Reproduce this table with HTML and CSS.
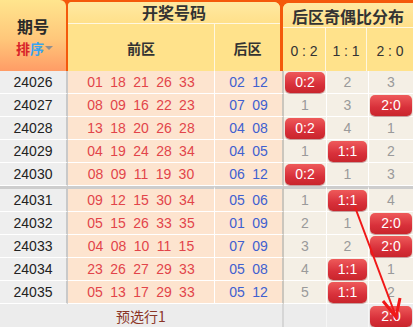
FILE: index.html
```html
<!DOCTYPE html>
<html lang="zh">
<head>
<meta charset="utf-8">
<title>后区奇偶比分布</title>
<link rel="stylesheet" href="styles.css">
</head>
<body>
<div class="chart">
  <div class="head">
    <div class="h-issue">
      <div class="h-title">期号</div>
      <div class="sort"><span class="s-red">排</span><span class="s-blue">序</span><span class="caret"></span></div>
    </div>
    <div class="h-draw">
      <div class="h-top">开奖号码</div>
      <div class="h-sub">
        <div class="h-front">前区</div>
        <div class="h-back">后区</div>
      </div>
    </div>
    <div class="h-ratio">
      <div class="h-top h-top-r">后区奇偶比分布</div>
      <div class="h-sub">
        <div class="h-r h-r1">0 : 2</div>
        <div class="h-r h-r2">1 : 1</div>
        <div class="h-r h-r3">2 : 0</div>
      </div>
    </div>
  </div>
  <table class="grid">
    <tbody>
      <tr>
        <td class="c-issue">24026</td>
        <td class="c-front"><span>01</span><span>18</span><span>21</span><span>26</span><span>33</span></td>
        <td class="c-back"><span>02</span><span>12</span></td>
        <td class="c-r1"><div class="badge">0:2</div></td>
        <td class="c-r2">2</td>
        <td class="c-r3">3</td>
      </tr>
      <tr>
        <td class="c-issue">24027</td>
        <td class="c-front"><span>08</span><span>09</span><span>16</span><span>22</span><span>23</span></td>
        <td class="c-back"><span>07</span><span>09</span></td>
        <td class="c-r1">1</td>
        <td class="c-r2">3</td>
        <td class="c-r3"><div class="badge">2:0</div></td>
      </tr>
      <tr>
        <td class="c-issue">24028</td>
        <td class="c-front"><span>13</span><span>18</span><span>20</span><span>26</span><span>28</span></td>
        <td class="c-back"><span>04</span><span>08</span></td>
        <td class="c-r1"><div class="badge">0:2</div></td>
        <td class="c-r2">4</td>
        <td class="c-r3">1</td>
      </tr>
      <tr>
        <td class="c-issue">24029</td>
        <td class="c-front"><span>04</span><span>19</span><span>24</span><span>28</span><span>34</span></td>
        <td class="c-back"><span>04</span><span>05</span></td>
        <td class="c-r1">1</td>
        <td class="c-r2"><div class="badge">1:1</div></td>
        <td class="c-r3">2</td>
      </tr>
      <tr>
        <td class="c-issue">24030</td>
        <td class="c-front"><span>08</span><span>09</span><span>11</span><span>19</span><span>30</span></td>
        <td class="c-back"><span>06</span><span>12</span></td>
        <td class="c-r1"><div class="badge">0:2</div></td>
        <td class="c-r2">1</td>
        <td class="c-r3">3</td>
      </tr>
      <tr class="sep">
        <td class="c-issue">24031</td>
        <td class="c-front"><span>09</span><span>12</span><span>15</span><span>30</span><span>34</span></td>
        <td class="c-back"><span>05</span><span>06</span></td>
        <td class="c-r1">1</td>
        <td class="c-r2"><div class="badge">1:1</div></td>
        <td class="c-r3">4</td>
      </tr>
      <tr>
        <td class="c-issue">24032</td>
        <td class="c-front"><span>05</span><span>15</span><span>26</span><span>33</span><span>35</span></td>
        <td class="c-back"><span>01</span><span>09</span></td>
        <td class="c-r1">2</td>
        <td class="c-r2">1</td>
        <td class="c-r3"><div class="badge">2:0</div></td>
      </tr>
      <tr>
        <td class="c-issue">24033</td>
        <td class="c-front"><span>04</span><span>08</span><span>10</span><span>11</span><span>15</span></td>
        <td class="c-back"><span>07</span><span>09</span></td>
        <td class="c-r1">3</td>
        <td class="c-r2">2</td>
        <td class="c-r3"><div class="badge">2:0</div></td>
      </tr>
      <tr>
        <td class="c-issue">24034</td>
        <td class="c-front"><span>23</span><span>26</span><span>27</span><span>29</span><span>33</span></td>
        <td class="c-back"><span>05</span><span>08</span></td>
        <td class="c-r1">4</td>
        <td class="c-r2"><div class="badge">1:1</div></td>
        <td class="c-r3">1</td>
      </tr>
      <tr>
        <td class="c-issue">24035</td>
        <td class="c-front"><span>05</span><span>13</span><span>17</span><span>29</span><span>33</span></td>
        <td class="c-back"><span>05</span><span>12</span></td>
        <td class="c-r1">5</td>
        <td class="c-r2"><div class="badge">1:1</div></td>
        <td class="c-r3">2</td>
      </tr>
      <tr class="foot">
        <td class="c-issue"></td>
        <td class="c-front f-label">预选行1</td>
        <td class="c-back"></td>
        <td class="c-r1"></td>
        <td class="c-r2"></td>
        <td class="c-r3"><div class="badge">2:0</div></td>
      </tr>
    </tbody>
  </table>
  <svg class="arrow" width="413" height="327" viewBox="0 0 413 327">
    <line x1="355" y1="207" x2="395" y2="314" stroke="#f01818" stroke-width="2"/>
    <polyline points="383,301 396,317 400,298" fill="none" stroke="#f01818" stroke-width="3" stroke-linejoin="miter"/>
  </svg>
</div>
</body>
</html>
```

FILE: styles.css
```css
html, body {
  margin: 0;
  padding: 0;
  background: #ffffff;
}

.chart {
  position: relative;
  width: 413px;
  height: 327px;
  overflow: hidden;
  font-family: "Liberation Sans", Arial, "Noto Sans CJK SC", sans-serif;
  font-size: 14px;
  color: #222;
}

.head {
  display: flex;
  height: 71px;
  background: #f4590b;
  font-family: "Noto Sans CJK SC", "Liberation Sans", sans-serif;
  font-weight: bold;
  color: #2a2a2a;
}

.h-issue {
  width: 66px;
  margin-right: 2px;
  border-top-right-radius: 6px;
  background: linear-gradient(#ffe58e, #ffc77a 55%, #ff9c66);
  display: flex;
  flex-direction: column;
  align-items: center;
  justify-content: center;
  padding-top: 2px;
  box-sizing: border-box;
}

.h-title {
  font-size: 16px;
  line-height: 19px;
  height: 19px;
}

.sort {
  display: flex;
  align-items: center;
  font-size: 14px;
  line-height: 17px;
  height: 17px;
  margin-top: 4px;
  margin-left: 3px;
}

.s-red { color: #d8232a; }
.s-blue { color: #3aa4ee; }

.caret {
  width: 0;
  height: 0;
  margin-left: 1px;
  border-left: 4px solid transparent;
  border-right: 4px solid transparent;
  border-top: 4px solid #8f8f8f;
}

.h-draw {
  width: 212px;
  margin-top: 2px;
  margin-right: 3px;
  display: flex;
  flex-direction: column;
  border-radius: 4px 6px 0 0;
  background: #ffe28b;
}

.h-ratio {
  flex: 1;
  margin-top: 3px;
  display: flex;
  flex-direction: column;
  border-radius: 6px 0 0 0;
  background: #ffe28b;
}

.h-top {
  height: 21px;
  line-height: 21px;
  font-size: 16px;
  text-align: center;
  border-bottom: 1px solid #fff7e0;
  border-radius: 4px 6px 0 0;
  background: linear-gradient(#ffe9a2, #ffe08a);
  color: #333;
}

.h-top-r {
  height: 24px;
  line-height: 26px;
  border-radius: 6px 0 0 0;
}

.h-sub {
  flex: 1;
  display: flex;
}

.h-front {
  width: 146px;
  border-right: 1px solid #fff7e0;
  display: flex;
  align-items: center;
  justify-content: center;
  font-size: 14px;
  color: #333;
}

.h-back {
  flex: 1;
  display: flex;
  align-items: center;
  justify-content: center;
  font-size: 14px;
  color: #333;
}

.h-r {
  display: flex;
  align-items: center;
  justify-content: center;
  font-family: "Liberation Sans", Arial, sans-serif;
  font-weight: normal;
  font-size: 14px;
  color: #333;
  padding-top: 3px;
  box-sizing: border-box;
}

.h-r1 { width: 43px; border-right: 1px solid #fff7e0; }
.h-r2 { width: 41px; border-right: 1px solid #fff7e0; }
.h-r3 { flex: 1; }

.grid {
  border-collapse: separate;
  border-spacing: 0;
  table-layout: fixed;
  width: 413px;
}

.grid td {
  height: 22px;
  padding: 0;
  border-bottom: 1px solid #ffffff;
  text-align: center;
  vertical-align: middle;
  line-height: 22px;
  white-space: nowrap;
}

.c-issue {
  width: 66px;
  background: #eeeeee;
  color: #222;
  border-right: 2px solid #c9c9c9;
}

.c-front {
  width: 146px;
  background: #fde4cf;
  color: #e2444a;
  border-right: 1px solid #ffffff;
}

.c-back {
  width: 67px;
  background: #fde4cf;
  color: #4060d0;
  border-right: 2px solid #cbc6bd;
}

.c-front span,
.c-back span {
  display: inline-block;
  margin: 0 3.7px;
}

.c-r1,
.c-r2,
.c-r3 {
  background: #f4efe5;
  color: #9a9a9a;
}

.c-r1 { width: 42px; border-right: 1px solid #ffffff; }
.c-r2 { width: 41px; border-right: 1px solid #ffffff; }
.c-r3 { width: 44px; }

.sep td {
  border-top: 3px solid #cdcdcd;
}

.badge {
  margin: 0 1px;
  height: 21px;
  line-height: 21px;
  border-radius: 5px;
  background: linear-gradient(#ee5a5a, #d8303a 60%, #c9252c);
  color: #ffffff;
  font-size: 14px;
  box-shadow: 0 1px 1px rgba(120, 20, 20, 0.45);
}

.foot td {
  height: 23px;
  background: #ececec;
  border-bottom: none;
}

.foot .c-issue,
.foot .c-front {
  border-right-color: #ececec;
}

.foot .c-back {
  border-right-color: #d6d6d6;
}

.foot .c-r1,
.foot .c-r2 {
  border-right-color: #f6f6f6;
}

.foot .badge {
  margin-top: 1px;
}

.f-label {
  color: #8b3526;
  font-family: "Noto Sans CJK SC", "Liberation Sans", sans-serif;
  font-size: 14px;
}

.arrow {
  position: absolute;
  left: 0;
  top: 0;
  pointer-events: none;
}
```
